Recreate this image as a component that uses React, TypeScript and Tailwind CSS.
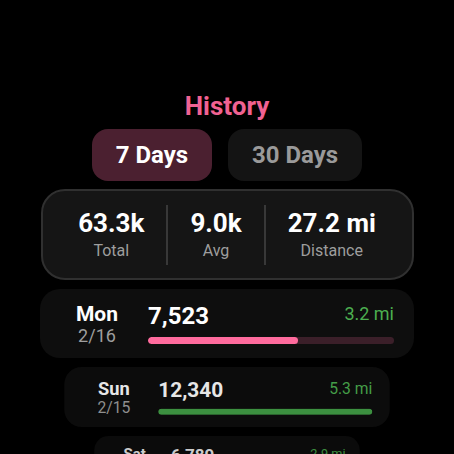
import React from 'react';

interface DayEntry {
  day: string;
  date: string;
  steps: number;
  miles: string;
  wrap: string;
  inner: string;
}

const MAX_STEPS = 12340;
const GOAL = 10000;

const days: DayEntry[] = [
  { day: 'Mon', date: '2/16', steps: 7523, miles: '3.2 mi', wrap: 'h-[69px]', inner: '' },
  { day: 'Sun', date: '2/15', steps: 12340, miles: '5.3 mi', wrap: 'h-[60px]', inner: 'scale-[0.87] opacity-90' },
  { day: 'Sat', date: '2/14', steps: 6789, miles: '2.9 mi', wrap: 'h-[50px]', inner: 'scale-[0.71] opacity-80' },
];

const Stat: React.FC<{ value: string; label: string }> = ({ value, label }) => (
  <div className="flex flex-col items-center px-[22px]">
    <span className="text-[26px] leading-[30px] font-bold text-white">{value}</span>
    <span className="mt-[3px] text-[16px] leading-[20px] text-[#9e9e9e]">{label}</span>
  </div>
);

const DayRow: React.FC<{ entry: DayEntry }> = ({ entry }) => {
  const pct = (entry.steps / MAX_STEPS) * 100;
  const reached = entry.steps >= GOAL;
  return (
    <div className={`shrink-0 mt-[9px] w-[374px] ${entry.wrap}`}>
      <div className={`origin-top h-[69px] w-[374px] rounded-[20px] bg-[#0e0e0e] flex items-center pl-6 pr-5 ${entry.inner}`}>
        <div className="w-[66px] flex flex-col items-center">
          <span className="text-[21px] leading-[24px] font-bold text-white">{entry.day}</span>
          <span className="text-[18px] leading-[20px] text-[#9e9e9e]">{entry.date}</span>
        </div>
        <div className="ml-[18px] flex-1 flex flex-col">
          <div className="flex justify-between items-start h-[27px]">
            <span className="text-[24px] leading-[27px] font-bold text-white">{entry.steps.toLocaleString('en-US')}</span>
            <span className="text-[18px] leading-[22px] text-[#4caf50]">{entry.miles}</span>
          </div>
          <div className={`mt-[7px] h-[7px] rounded-full overflow-hidden ${reached ? 'bg-[#1e3a1f]' : 'bg-[#3b1f29]'}`}>
            <div
              className={`h-full rounded-full ${reached ? 'bg-[#43a047]' : 'bg-[#ff6b9d]'}`}
              style={{ width: `${pct}%` }}
            />
          </div>
        </div>
      </div>
    </div>
  );
};

export default function App() {
  return (
    <div className="w-[454px] h-[454px] bg-black overflow-hidden flex flex-col items-center pt-[91px] font-['Roboto',sans-serif]">
      <h1 className="shrink-0 text-[26px] leading-[30px] font-bold text-[#f06292]">History</h1>

      <div className="shrink-0 mt-[8px] flex gap-4">
        <button className="h-[52px] w-[120px] rounded-[16px] bg-[#4b2030] text-[24px] leading-[28px] font-bold text-white">7 Days</button>
        <button className="h-[52px] w-[134px] rounded-[16px] bg-[#141414] text-[24px] leading-[28px] font-bold text-[#9a9a9a]">30 Days</button>
      </div>

      <div className="shrink-0 mt-2 w-[373px] h-[91px] rounded-[24px] border-2 border-[#303030] bg-[#151515] flex items-center justify-center">
        <Stat value="63.3k" label="Total" />
        <div className="w-[2px] h-[60px] bg-[#383838]" />
        <Stat value="9.0k" label="Avg" />
        <div className="w-[2px] h-[60px] bg-[#383838]" />
        <Stat value="27.2 mi" label="Distance" />
      </div>

      {days.map(d => (
        <DayRow key={d.day} entry={d} />
      ))}
    </div>
  );
}
